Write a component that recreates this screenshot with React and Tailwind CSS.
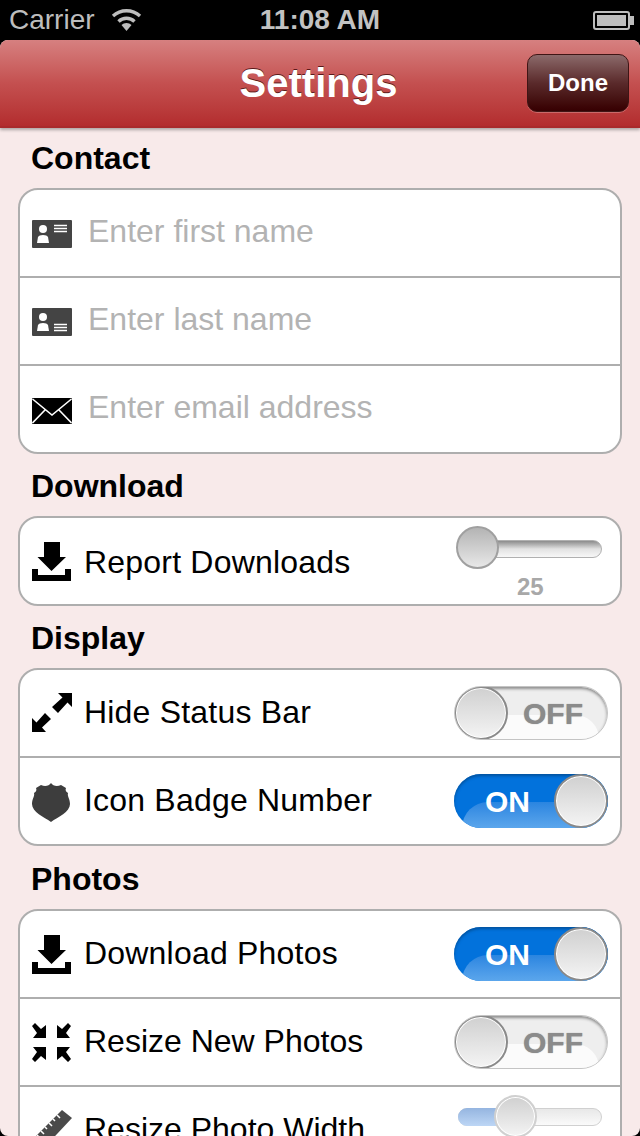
const Card = ({ lines }) => (
  <svg width="40" height="28" viewBox="0 0 40 28" className="shrink-0 translate-y-px">
    <rect width="40" height="28" rx="1" fill="#444" />
    <circle cx="11" cy="9" r="4" fill="#fff" />
    <path d="M5 23 L6 17 Q7 15 11 15 Q15 15 16 17 L17 23 Z" fill="#fff" />
    {lines === "top" ? (
      <path d="M22 5.5h13M22 8.5h13M22 11.5h13" stroke="#fff" strokeWidth="1.5" />
    ) : (
      <path d="M22 16.5h13M22 19.5h13M22 22.5h13" stroke="#fff" strokeWidth="1.5" />
    )}
  </svg>
);

const Mail = () => (
  <svg width="40" height="26" viewBox="0 0 40 26" className="shrink-0 translate-y-[2px]">
    <rect width="40" height="26" rx="1" fill="#000" />
    <path d="M0.5 1 L20 17 L39.5 1 M0.5 25 L13 12 M39.5 25 L27 12" stroke="#fff" strokeWidth="1.6" fill="none" />
  </svg>
);

const Download = () => (
  <svg width="40" height="40" viewBox="0 0 40 40" className="shrink-0 translate-y-px">
    <path d="M12 0h16v15h6L19.5 29 5.5 15H12z" fill="#000" />
    <path d="M0 27h6v6h27v-6h6v12H0z" fill="#000" />
  </svg>
);

const Expand = () => (
  <svg width="40" height="40" viewBox="0 0 40 40" className="shrink-0">
    <path d="M26 0H40V14L35.5 9.5L26 20L20 14L30.5 4.5Z" fill="#000" />
    <path d="M0 39V25L4.5 29.5L13 20L19 26L10 34.5L14 39Z" fill="#000" />
  </svg>
);

const Shrink = () => (
  <svg width="39" height="39" viewBox="0 0 39 39" className="shrink-0">
    <g fill="#000">
      <path d="M0 3L3 0L9 6L14 2V15H1L5 10Z" />
      <path d="M39 3L36 0L30 6L25 2V15H38L34 10Z" />
      <path d="M0 36L3 39L9 33L14 37V24H1L5 29Z" />
      <path d="M39 36L36 39L30 33L25 37V24H38L34 29Z" />
    </g>
  </svg>
);

const Shield = () => (
  <svg width="38" height="39" viewBox="0 0 38 39" className="shrink-0 translate-y-px">
    <path
      d="M19 0 C21 3 25 4 29 2 L34 5 C33 7 34 9 36 10 C35 13 38 16 38 21 C38 29 26 34 19 39 C12 34 0 29 0 21 C0 16 3 13 2 10 C4 9 5 7 4 5 L9 2 C13 4 17 3 19 0 Z"
      fill="#3d3d3d"
    />
  </svg>
);

const Ruler = () => (
  <svg width="40" height="40" viewBox="0 0 40 40" className="shrink-0">
    <path d="M30 0L40 8L10 40L0 30Z" fill="#4a4a4a" />
    <path d="M25 5l3 3M21 9l2 2M17 13l3 3M13 17l2 2M9 21l3 3M5 25l2 2" stroke="#fff" strokeWidth="1.5" />
  </svg>
);

const Knob = ({ className }) => (
  <div
    className={`absolute rounded-full border-2 border-[#8a8a8a] bg-linear-to-b from-[#d0d0d0] to-[#f4f4f4] shadow-[inset_0_0_0_1px_#fff] ${className}`}
  />
);

const Toggle = ({ on }) =>
  on ? (
    <div className="relative h-[54px] w-[154px] shrink-0 overflow-hidden rounded-full bg-[#0272dc] shadow-[inset_0_2px_3px_#02529e]">
      <div className="absolute bottom-0 left-[8px] right-0 h-[26px] rounded-tl-[26px] bg-linear-to-b from-[#2a85e0] to-[#5ba6ec]" />
      <span className="absolute left-[31px] top-[11px] text-[30px] leading-[34px] font-bold text-white">ON</span>
      <Knob className="right-0 top-0 size-[54px]" />
    </div>
  ) : (
    <div className="relative h-[54px] w-[154px] shrink-0 overflow-hidden rounded-full border border-[#c4c4c4] bg-[#eeeeee] shadow-[inset_0_2px_3px_#8f8f8f]">
      <div className="absolute bottom-0 left-[8px] right-[8px] h-[24px] rounded-tr-[24px] bg-[#fbfbfb]" />
      <span className="absolute left-[68px] top-[10px] text-[30px] leading-[34px] font-bold text-[#8b8b8b] [text-shadow:0_0_1px_#8b8b8b]">OFF</span>
      <Knob className="-left-px -top-px size-[54px]" />
    </div>
  );

const Row = ({ icon, label, right, placeholder, labelClass = "-translate-y-px tracking-[0.2px]" }) => (
  <div className="flex h-[86px] items-center justify-between px-[12px] not-last:h-[88px]">
    <div className="flex items-center">
      <div className="flex w-[42px] justify-start">{icon}</div>
      {placeholder ? (
        <span className="ml-[14px] -translate-y-[2px] text-[32px] leading-[36px] text-[#b3b3b3]">{placeholder}</span>
      ) : (
        <span className={`ml-[10px] text-[32px] leading-[36px] text-black ${labelClass}`}>{label}</span>
      )}
    </div>
    {right}
  </div>
);

const Group = ({ children }) => (
  <div className="mx-[18px] flex flex-col divide-y-2 divide-[#aeaeae] rounded-[20px] border-2 border-[#aeaeae] bg-white">
    {children}
  </div>
);

const Section = ({ title, h, children }) => (
  <section>
    <div className={`flex items-center pl-[31px] text-[32px] leading-[36px] font-bold text-black ${h}`}>{title}</div>
    {children}
  </section>
);

export default function App() {
  return (
    <div
      className="relative flex h-[1136px] w-[640px] flex-col overflow-hidden bg-black"
      style={{ fontFamily: '"Liberation Sans", Arial, sans-serif' }}
    >
      <header className="flex h-[40px] shrink-0 items-center justify-between pl-[9px] pr-[6px] text-[#bdbdbd]">
        <div className="flex w-[200px] items-center">
          <span className="text-[28px] leading-[30px]">Carrier</span>
          <svg width="31" height="22" viewBox="0 0 31 22" className="ml-[16px]">
            <path d="M15.5 22l-5-6a7 7 0 0110 0z" fill="#bdbdbd" />
            <path d="M7.5 12.5a11.5 11.5 0 0116 0" stroke="#bdbdbd" strokeWidth="3.4" fill="none" />
            <path d="M2 7a20 20 0 0127 0" stroke="#bdbdbd" strokeWidth="3.4" fill="none" />
          </svg>
        </div>
        <span className="-ml-[3px] text-[28px] leading-[30px] font-bold text-[#c2c2c2]">11:08 AM</span>
        <div className="flex w-[200px] items-center justify-end">
          <div className="flex h-[19px] w-[37px] items-center rounded-[3px] border-2 border-[#bdbdbd] p-[2px]">
            <div className="h-full w-full bg-[#bdbdbd]" />
          </div>
          <div className="h-[9px] w-[4px] bg-[#bdbdbd]" />
        </div>
      </header>

      <div className="flex min-h-0 flex-1 flex-col overflow-hidden rounded-[8px] bg-[#f8eaea]">
        <nav className="relative flex h-[88px] shrink-0 items-center justify-center border-b-2 border-[#a92a2c] bg-linear-to-b from-[#d68080] via-[#c45050] to-[#b32c2e] pr-[3px] shadow-[0_2px_3px_rgba(0,0,0,0.3)]">
          <span className="text-[40px] leading-[44px] font-bold text-white [text-shadow:0_-1px_0_#5a1a1a]">Settings</span>
          <button className="absolute right-[11px] top-[14px] flex h-[58px] w-[102px] items-center justify-center rounded-[10px] border border-[#3f1515] bg-linear-to-b from-[#8b6a6b] via-[#5a2a2b] to-[#360002] text-[24px] leading-[30px] font-bold text-white shadow-[0_1px_0_rgba(255,255,255,0.25)]">
            Done
          </button>
        </nav>

        <Section title="Contact" h="h-[60px]">
          <Group>
            <Row icon={<Card lines="top" />} placeholder="Enter first name" />
            <Row icon={<Card lines="bottom" />} placeholder="Enter last name" />
            <Row icon={<Mail />} placeholder="Enter email address" />
          </Group>
        </Section>

        <Section title="Download" h="h-[62px] pt-[2px]">
          <Group>
            <Row
              icon={<Download />}
              label="Report Downloads"
              labelClass="translate-y-px tracking-[0.2px]"
              right={
                <div className="relative mr-[4px] h-[86px] w-[148px] shrink-0">
                  <div className="absolute left-[2px] top-[22px] h-[18px] w-[144px] rounded-full border border-[#b0b0b0] bg-linear-to-b from-[#8c8c8c] via-[#e2e2e2] to-[#f7f7f7]" />
                  <Knob className="left-0 top-[8px] size-[43px] border-[#a0a0a0] from-[#b4b4b4]! to-[#e8e8e8]! shadow-none!" />
                  <span className="absolute left-[61px] top-[55px] text-[24px] leading-[28px] font-bold text-[#a8a8a8]">25</span>
                </div>
              }
            />
          </Group>
        </Section>

        <Section title="Display" h="h-[62px] pt-[2px]">
          <Group>
            <Row icon={<Expand />} label="Hide Status Bar" right={<Toggle />} />
            <Row icon={<Shield />} label="Icon Badge Number" right={<Toggle on />} />
          </Group>
        </Section>

        <Section title="Photos" h="h-[63px] pt-[2px]">
          <Group>
            <Row icon={<Download />} label="Download Photos" right={<Toggle on />} />
            <Row icon={<Shrink />} label="Resize New Photos" labelClass="-translate-y-px" right={<Toggle />} />
            <Row
              icon={<Ruler />}
              label="Resize Photo Width"
              labelClass="-translate-y-px"
              right={
                <div className="relative mr-[4px] h-[86px] w-[148px] shrink-0">
                  <div className="absolute left-[2px] top-[21px] h-[18px] w-[144px] rounded-full border border-[#d0d0d0] bg-linear-to-b from-[#e8e8e8] to-[#fafafa]" />
                  <div className="absolute left-[2px] top-[21px] h-[18px] w-[50px] rounded-l-full bg-linear-to-b from-[#95b5e0] to-[#bdd6f5]" />
                  <Knob className="left-[38px] top-[8px] size-[43px] border-[#d0d0d0]" />
                </div>
              }
            />
          </Group>
        </Section>
      </div>
    </div>
  );
}
